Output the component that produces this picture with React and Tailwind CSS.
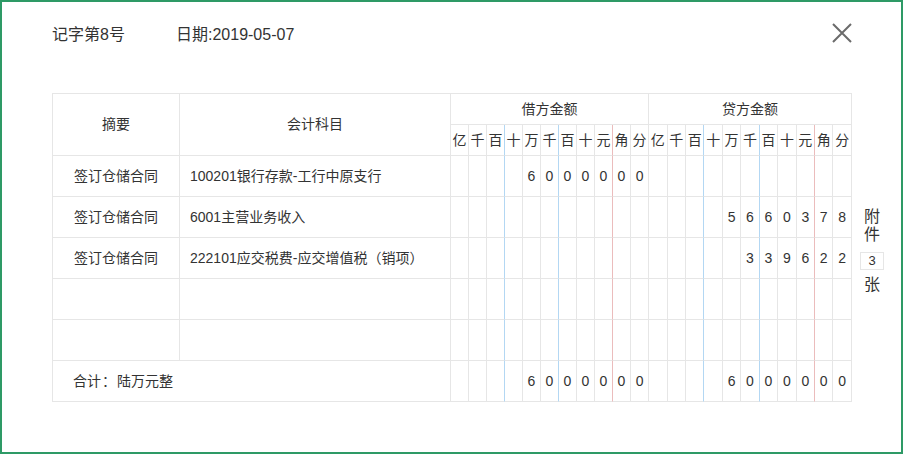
const UNITS = ['亿', '千', '百', '十', '万', '千', '百', '十', '元', '角', '分'];

const ROWS = [
  { zy: '签订仓储合同', km: '100201银行存款-工行中原支行', jf: 6000000, df: null },
  { zy: '签订仓储合同', km: '6001主营业务收入', jf: null, df: 5660378 },
  { zy: '签订仓储合同', km: '222101应交税费-应交增值税（销项）', jf: null, df: 339622 },
  { zy: '', km: '', jf: null, df: null },
  { zy: '', km: '', jf: null, df: null },
];

// 亿千百 | 十万千 | 百十元 | 角分
function lineColor(i) {
  if (i === 2 || i === 5) return 'border-r-[#b3d7f3]';
  if (i === 8) return 'border-r-[#ebbcbc]';
  return 'border-r-[#e6e6e6]';
}

function toDigits(n) {
  if (n == null) return Array(11).fill('');
  return String(n).padStart(11, ' ').split('').map(c => c.trim());
}

function DigitCells({ value }) {
  return toDigits(value).map((d, i) => (
    <td key={i} className={`border-r border-b border-b-[#e6e6e6] ${lineColor(i)} text-center p-0`}>{d}</td>
  ));
}

export default function App() {
  const cell = 'border-r border-b border-[#e6e6e6]';

  return (
    <div className="w-[905px] h-[454px] bg-white font-['Liberation_Sans','Noto_Sans_CJK_SC',sans-serif] text-[#333]">
      <div className="w-[903px] h-[454px] border-2 border-[#2e9a66] pt-[23px] pl-[50px]">
        {/* 头部 */}
        <div className="flex items-center h-[20px] text-[16px] leading-[20px]">
          <span className="w-[124px]">记字第8号</span>
          <span>日期:2019-05-07</span>
          <svg className="ml-auto mr-[49px] mb-1" width="20" height="20" viewBox="0 0 20 20">
            <path d="M1 1 L19 19 M19 1 L1 19" stroke="#6b6b6b" strokeWidth="2" fill="none" />
          </svg>
        </div>

        <div className="flex mt-[48px]">
          <table className="w-[800px] table-fixed border-separate border-spacing-0 border-l border-t border-[#e6e6e6] text-[14px]">
            <colgroup>
              <col className="w-[127px]" />
              <col className="w-[271px]" />
              {UNITS.map((_, i) => <col key={'j' + i} className="w-[18px]" />)}
              {UNITS.map((_, i) => <col key={'d' + i} />)}
            </colgroup>
            <thead>
              <tr className="h-[31px]">
                <th rowSpan={2} className={`${cell} font-normal`}>摘要</th>
                <th rowSpan={2} className={`${cell} font-normal`}>会计科目</th>
                <th colSpan={11} className={`${cell} font-normal`}>借方金额</th>
                <th colSpan={11} className={`${cell} font-normal`}>贷方金额</th>
              </tr>
              <tr className="h-[31px]">
                {[0, 1].map(k => UNITS.map((u, i) => (
                  <th key={k + '-' + i} className={`border-r border-b border-b-[#e6e6e6] ${lineColor(i)} font-normal p-0 text-center`}>{u}</th>
                )))}
              </tr>
            </thead>
            <tbody>
              {ROWS.map((r, idx) => (
                <tr key={idx} className="h-[41px]">
                  <td className={`${cell} text-center`}>{r.zy}</td>
                  <td className={`${cell} pl-[10px]`}>{r.km}</td>
                  <DigitCells value={r.jf} />
                  <DigitCells value={r.df} />
                </tr>
              ))}
              <tr className="h-[41px]">
                <td colSpan={2} className={`${cell} pl-[20px]`}>
                  合计<span className="inline-block w-[16px] text-center">：</span>陆万元整
                </td>
                <DigitCells value={6000000} />
                <DigitCells value={6000000} />
              </tr>
            </tbody>
          </table>

          {/* 附件 */}
          <div className="ml-[8px] mt-[115px] w-[24px] flex flex-col items-center text-[16px] leading-[18px]">
            <span>附</span>
            <span>件</span>
            <span className="mt-[8px] w-[24px] h-[18px] border border-[#e6e6e6] text-[13px] leading-[16px] text-center">3</span>
            <span className="mt-[6px]">张</span>
          </div>
        </div>
      </div>
    </div>
  );
}
